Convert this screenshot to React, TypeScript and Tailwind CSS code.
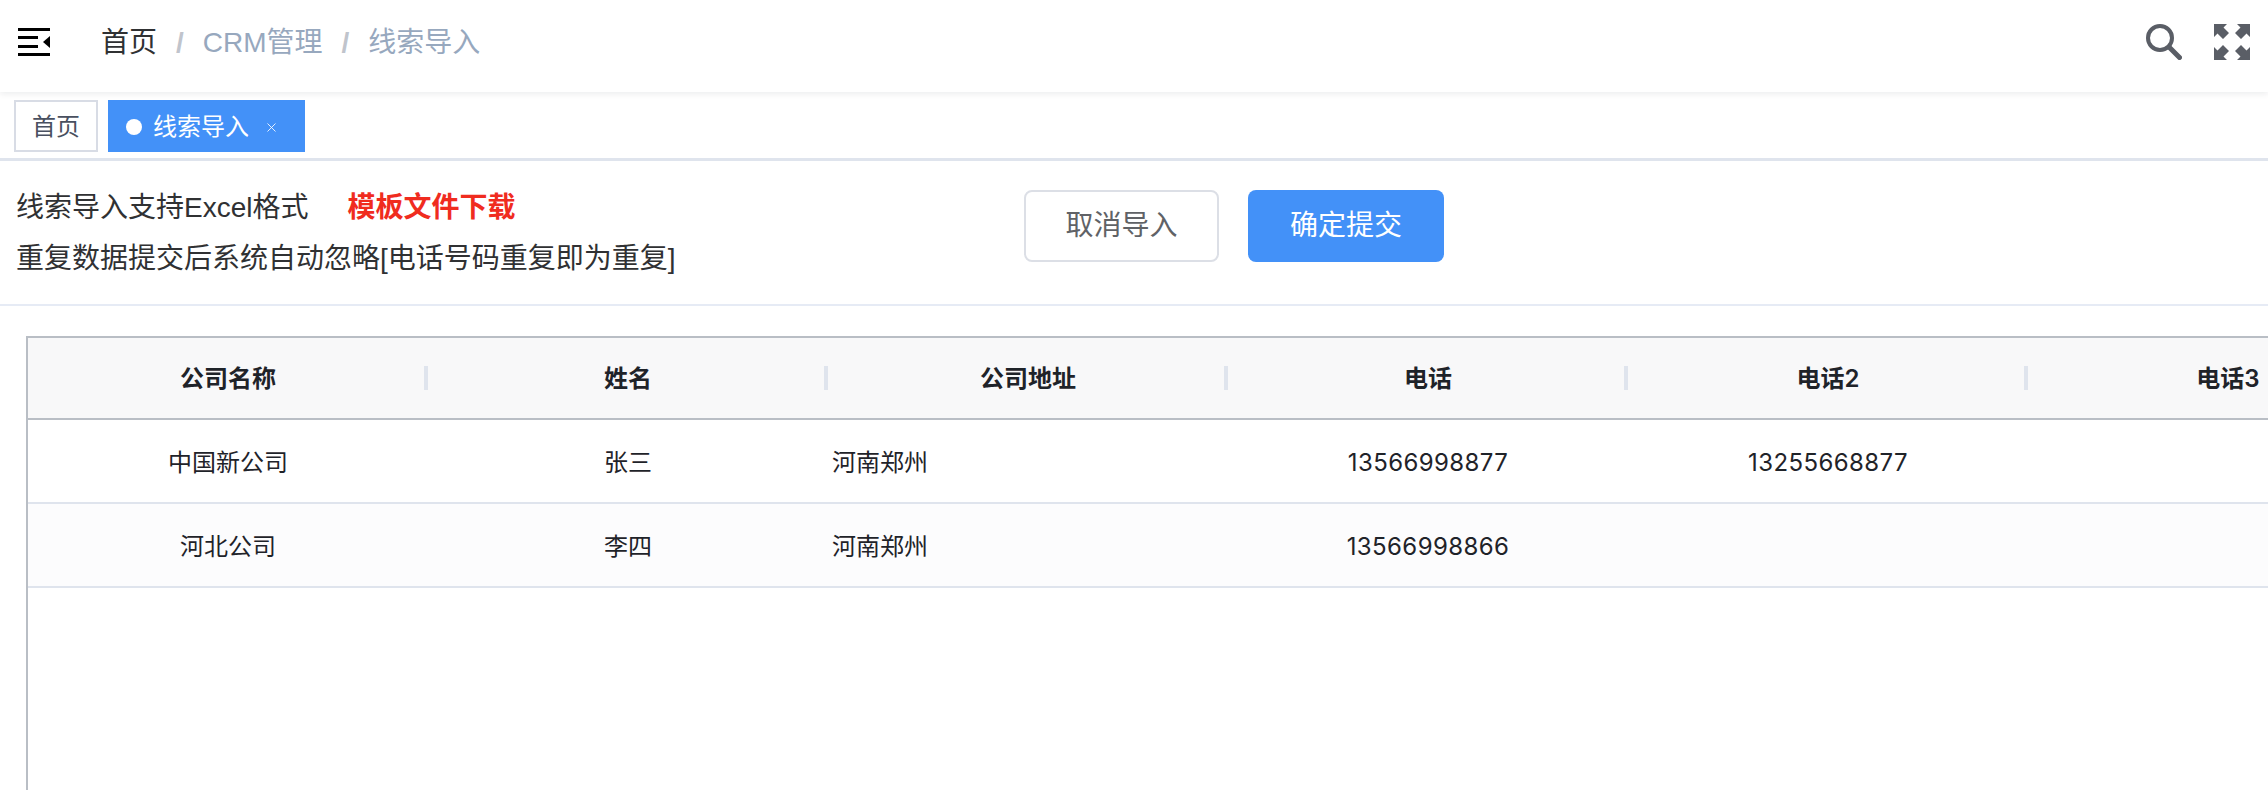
const columns = ["公司名称", "姓名", "公司地址", "电话", "电话2", "电话3"];

const rows = [
  { company: "中国新公司", name: "张三", address: "河南郑州", phone: "13566998877", phone2: "13255668877" },
  { company: "河北公司", name: "李四", address: "河南郑州", phone: "13566998866", phone2: "" },
];

function MenuIcon() {
  return (
    <svg width="32" height="28" viewBox="0 0 32 28" fill="#000">
      <rect x="0" y="0" width="32" height="3" />
      <rect x="0" y="8" width="20" height="3" />
      <rect x="0" y="17" width="20" height="3" />
      <rect x="0" y="25" width="32" height="3" />
      <path d="M32 8v12l-7-6z" />
    </svg>
  );
}

function SearchIcon() {
  return (
    <svg width="36" height="36" viewBox="0 0 36 36" fill="none" stroke="#5a5e66">
      <circle cx="14" cy="14" r="12" strokeWidth="4" />
      <path d="M23.5 23.5l10 10" strokeWidth="5" strokeLinecap="round" />
    </svg>
  );
}

function FullscreenIcon() {
  const arrow = "M0 0H13L9.5 3.5 15 9 9 15 3.5 9.5 0 13z";
  return (
    <svg width="36" height="36" viewBox="0 0 36 36" fill="#5a5e66">
      <path d={arrow} />
      <path d={arrow} transform="matrix(-1 0 0 1 36 0)" />
      <path d={arrow} transform="matrix(1 0 0 -1 0 36)" />
      <path d={arrow} transform="matrix(-1 0 0 -1 36 36)" />
    </svg>
  );
}

function CloseIcon() {
  return (
    <svg width="9" height="9" viewBox="0 0 9 9" stroke="#fff" strokeOpacity="0.85" fill="none">
      <path d="M0.5 0.5l8 8M8.5 0.5l-8 8" />
    </svg>
  );
}

export default function App() {
  return (
    <div className="h-[790px] overflow-hidden bg-white font-['Liberation_Sans','Noto_Sans_CJK_SC',sans-serif]">
      {/* navbar */}
      <div className="flex h-[92px] items-center justify-between pb-2 shadow-[0_2px_6px_rgba(0,21,41,0.08)]">
        <div className="flex items-center">
          <div className="ml-[18px] mr-[51px] flex">
            <MenuIcon />
          </div>
          <div className="flex items-center pt-[2px] text-[28px]">
            <span className="text-[#303133]">首页</span>
            <span className="mx-[19px] font-bold text-[#c0c4cc]">/</span>
            <span className="text-[#97a8be]">CRM管理</span>
            <span className="mx-[19px] font-bold text-[#c0c4cc]">/</span>
            <span className="text-[#97a8be]">线索导入</span>
          </div>
        </div>
        <div className="mr-[18px] flex items-center gap-8">
          <SearchIcon />
          <FullscreenIcon />
        </div>
      </div>

      {/* tabs */}
      <div className="flex h-[69px] gap-[10px] border-b-[3px] border-[#dfe4ed] pl-[14px] pt-[8px]">
        <div className="flex h-[52px] w-[84px] items-center justify-center border-2 border-[#d8dce5] pt-[2px] text-[24px] text-[#495060]">
          首页
        </div>
        <div className="flex h-[52px] w-[197px] items-center bg-[#4391f8] pl-[18px] pt-[2px] text-[24px] text-white">
          <span className="mr-[11px] size-4 rounded-full bg-white" />
          线索导入
          <span className="ml-[18px] flex">
            <CloseIcon />
          </span>
        </div>
      </div>

      {/* import toolbar */}
      <div className="flex h-[145px] items-start border-b-2 border-[#e6ebf5]">
        <div className="w-[1024px] pl-4 pt-[21px] text-[28px] leading-[51px] text-[#303133]">
          <div className="flex">
            线索导入支持Excel格式
            <span className="ml-[39px] font-bold text-[#f02c1f]">模板文件下载</span>
          </div>
          <div>重复数据提交后系统自动忽略[电话号码重复即为重复]</div>
        </div>
        <button className="mt-[29px] h-[72px] w-[195px] rounded-lg border-2 border-[#dcdfe6] text-[28px] text-[#606266]">
          取消导入
        </button>
        <button className="ml-[29px] mt-[29px] h-[72px] w-[196px] rounded-lg bg-[#4391f8] text-[28px] text-white">
          确定提交
        </button>
      </div>

      {/* table */}
      <div className="ml-[26px] mt-[30px] h-[500px] border-l-2 border-t-2 border-[#b9bec5] font-['Inter','Noto_Sans_CJK_SC',sans-serif]">
        <table className="w-[2400px] table-fixed border-separate border-spacing-0 text-[24px] text-[#1f2329]">
          <thead>
            <tr>
              {columns.map((col) => (
                <th key={col} className="h-[82px] w-[400px] border-b-2 border-[#b9bec5] bg-[#f8f8f9] p-0 font-semibold">
                  <div className="flex h-6 items-center justify-center border-r-4 border-[#dfe4ed] pl-1">
                    <span className="mt-[2px]">{col}</span>
                  </div>
                </th>
              ))}
            </tr>
          </thead>
          <tbody>
            {rows.map((row, i) => (
              <tr key={row.company} className={i % 2 === 1 ? "bg-[#fcfcfd]" : ""}>
                <td className="h-[84px] border-b-2 border-[#dfe4ed] pt-[3px] text-center">{row.company}</td>
                <td className="border-b-2 border-[#dfe4ed] pt-[3px] text-center">{row.name}</td>
                <td className="border-b-2 border-[#dfe4ed] pl-1 pt-[3px]">{row.address}</td>
                <td className="border-b-2 border-[#dfe4ed] pt-[3px] text-center tracking-[0.4px]">{row.phone}</td>
                <td className="border-b-2 border-[#dfe4ed] pt-[3px] text-center tracking-[0.4px]">{row.phone2}</td>
                <td className="border-b-2 border-[#dfe4ed]" />
              </tr>
            ))}
          </tbody>
        </table>
      </div>
    </div>
  );
}
